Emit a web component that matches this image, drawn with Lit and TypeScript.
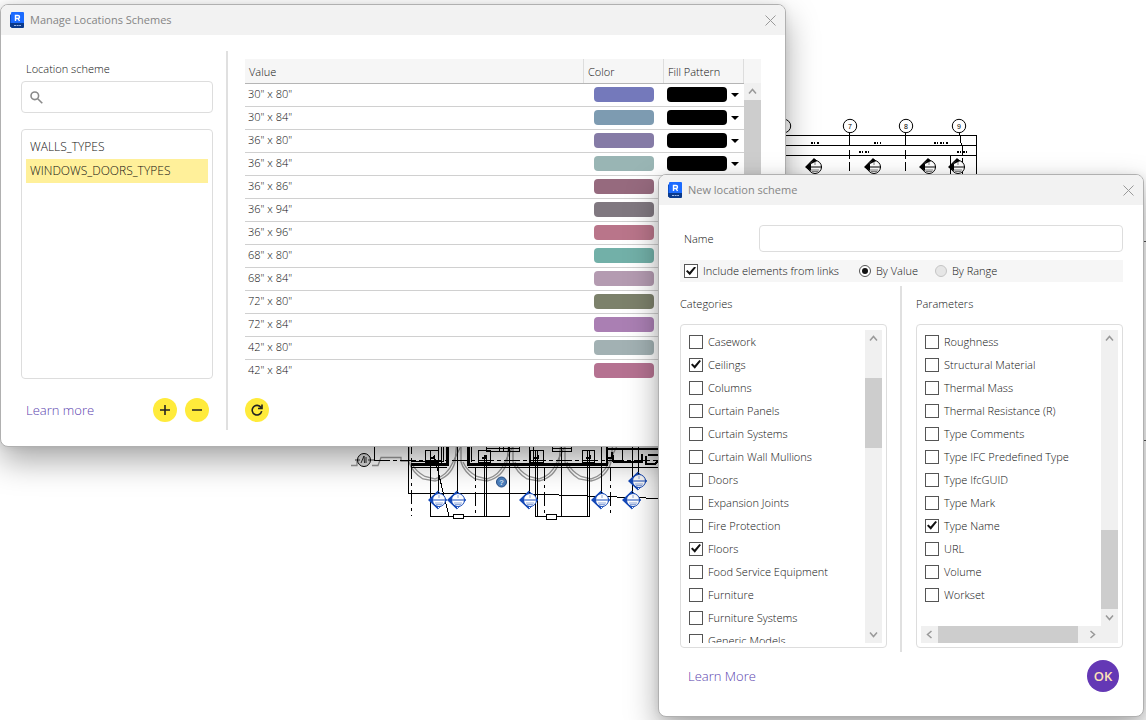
import { LitElement, html, svg, css } from "lit";
import { customElement } from "lit/decorators.js";
import { classMap } from "lit/directives/class-map.js";
import { styleMap } from "lit/directives/style-map.js";

const schemes = ["WALLS_TYPES", "WINDOWS_DOORS_TYPES"];

const values: [string, string][] = [
  ['30" x 80"', "#7479bb"],
  ['30" x 84"', "#7d9bb1"],
  ['36" x 80"', "#857ba6"],
  ['36" x 84"', "#99b5b4"],
  ['36" x 86"', "#966a7e"],
  ['36" x 94"', "#807880"],
  ['36" x 96"', "#b9758a"],
  ['68" x 80"', "#72b0a8"],
  ['68" x 84"', "#b49bb1"],
  ['72" x 80"', "#7c816b"],
  ['72" x 84"', "#aa7fb3"],
  ['42" x 80"', "#a2b1b3"],
  ['42" x 84"', "#b57291"],
];

const categories = [
  "Casework", "Ceilings", "Columns", "Curtain Panels", "Curtain Systems",
  "Curtain Wall Mullions", "Doors", "Expansion Joints", "Fire Protection",
  "Floors", "Food Service Equipment", "Furniture", "Furniture Systems",
  "Generic Models",
];

const parameters = [
  "Roughness", "Structural Material", "Thermal Mass", "Thermal Resistance (R)",
  "Type Comments", "Type IFC Predefined Type", "Type IfcGUID", "Type Mark",
  "Type Name", "URL", "Volume", "Workset",
];

const checked = new Set(["Ceilings", "Floors", "Type Name"]);

const base = css`
  * { box-sizing: border-box; }
  button, input, select { font: inherit; color: inherit; margin: 0; }
  button { border: 0; padding: 0; background: none; }
  .scroll { display: flex; flex-direction: column; background: #f0f0f0; width: 17px; }
  .scroll.flat { flex-direction: row; width: auto; height: 17px; }
  .arrow { flex: none; width: 17px; height: 17px; display: grid; place-items: center; }
  .arrow svg, .close svg { display: block; fill: none; stroke: #999; }
  .arrow svg { stroke-width: 1.5; }
  .thumb { background: #cdcdcd; }
  .link { color: #5b3fae; font-size: 13px; line-height: 20px; text-decoration: none; }
`;

const arrow = (d: string) => html`<span class="arrow"><svg width="9" height="9" viewBox="0 0 9 9"><path d=${d} /></svg></span>`;
const UP = "M1 6.500L4.500 2.500L8 6.500";
const DOWN = "M1 2.500L4.500 6.500L8 2.500";
const LEFT = "M6.500 1L2.500 4.500L6.500 8";
const RIGHT = "M2.500 1L6.500 4.500L2.500 8";

/** Floor plan shown on the drawing canvas behind the dialogs. */
@customElement("floor-plan")
class FloorPlan extends LitElement {
  static styles = css`
    :host { display: block; }
    svg { display: block; }
    text { font-family: "Liberation Sans", sans-serif; text-anchor: middle; }
  `;

  private grid(x: number, label: string) {
    return svg`<circle cx=${x} cy="126" r="6.700" fill="#fff" stroke="#000" />
      <text x=${x} y="128.500" font-size="7" font-weight="400">${label}</text>`;
  }

  private marker(x: number, y: number, color: string, outlined: boolean) {
    return svg`<g transform="translate(${x} ${y})" stroke=${color}>
      <path d=${outlined ? "M-10 0L0 -9.500V-4L-3 0L0 4V9.500Z" : "M-9 0L0 -9L4 -5L-2 -4L-4 0L-2 6Z"} fill=${color} stroke="none" />
      ${outlined ? svg`<path d="M0 -9L9 0L0 9" fill="none" stroke-width=".8" />` : ""}
      <circle cx="1" r="6.500" fill="#fff" />
      ${outlined ? "" : svg`<path d="M-8 0L1 -8L3 -6L-3 -3V4Z" fill=${color} stroke="none" />`}
      ${outlined ? svg`<path d="M-9 0L-1 -8V-6Q-6 -4 -6 0T-1 6V8Z" fill=${color} stroke="none" />` : ""}
      <path d="M-7 0H8" />
      <path d="M1 -5V-2M-3 3H5M-2 4.500H4" stroke-width=".8" opacity=".6" />
    </g>`;
  }

  render() {
    return html`<svg width="1146" height="720" viewBox="0 0 1146 720" aria-hidden="true">
      <g stroke="#000" fill="none" shape-rendering="crispEdges">
        <path d="M700 135.500H976.500V200M700 145.500H976M700 155.500H976M849.500 133V146M905.500 133V146M959.500 133L961.500 146M950.500 155V190" />
        <path d="M849.500 150V190M905.500 150V190M962.500 146V190" stroke-dasharray="9 3" />
        <path d="M811 142.500H819M874 142.500H881M934 142.500H948M859 151.500H870M957 151.500H969" stroke-dasharray="2 1 1 2" stroke-width="2" />
        <path d="M1140 241.500H1146M1140 440.500H1146" stroke="#555" />
      </g>
      ${this.grid(784, "")}${this.grid(850, "7")}${this.grid(906, "8")}${this.grid(959, "9")}
      ${[814, 873, 928, 957].map((x) => this.marker(x, 167, "#000", false))}

      <g fill="none" stroke="#999" stroke-width="1.300">
        <path d="M351 465.500H357V461M372 465.500H378L381 457.500H401V461H408" />
        ${[409, 461, 513, 565].map((x) => svg`
          <path d=${`M${x} 440V462Q${x + 3} 472 ${x + 14} 479L${x + 26} 481Q${x + 42} 477 ${x + 46} 462L${x + 48} 440`} />
          <path d=${`M${x + 2} 462Q${x + 6} 471 ${x + 16} 476.500L${x + 26} 479Q${x + 38} 476 ${x + 44} 462L${x + 52} 446`} />`)}
      </g>
      <g fill="none" stroke="#000" shape-rendering="crispEdges">
        <path d="M374.500 440V460M408.500 440V493.500H515L660 498.500M430.500 450V516.500H509.500V440M457.500 440V493M441.500 440V464M434.500 456V466M438.500 440V494M484.500 455V516M486.500 455V516M529.500 440V495M535.500 450V516.500H589.500V450M537.500 450V516M533.500 440V464M561.500 440V516M587.500 450V516M601.500 440V495M632.500 440V495M638.500 440V476M434 455L449 516" />
        <path d="M425.500 450.500H438.500V462.500H425.500ZM478.500 450.500H490.500V462.500H478.500ZM530.500 450.500H543.500V462.500H530.500ZM582.500 450.500H594.500V462.500H582.500Z" />
        <path d="M486.500 440V451.500H519.500V440M499.500 446V451M503.500 446V451M508.500 446V451M552.500 440V451.500H571.500V440M552.500 448.500H571M487 448.500H519" />
        <path d="M411 464.500H447.500V440M468.500 440V464.500H608" stroke-width="3" />
        <path d="M443.500 440V461H411M471.500 440V462M411 467.500H447M468 467.500H608" />
        <path d="M374 460.500H660" stroke-dasharray="16 3 4 3" />
        <path d="M411.500 440V516M475.500 467V516M544.500 467V516M610.500 467V516" stroke-dasharray="14 4 3 4" />
        <path d="M606 448.500H660M606.500 440V464M613 461.500H642V454M648 454.500H660M613 455V462M646 456V464H655L660 459" stroke-width="2" />
        <path d="M608 467.500H660M622.500 448V460" />
        <path d="M430 458H434V456M482 458H486V455M534 458H538V455M586 458H590V455M607 458H612V452" stroke-width="2" />
        <path d="M453.500 514.500H463.500V518.500H453.500ZM546.500 514.500H556.500V519.500H546.500Z" fill="#fff" />
      </g>
      <circle cx="364" cy="460" r="6.500" fill="#ddd" stroke="#000" />
      <path d="M355 460H360M368 460H374M361 463L364 456L364.500 463M366 457V463" fill="none" stroke="#000" stroke-width=".8" />
      ${[438, 457, 529, 601, 632].map((x) => this.marker(x, 500, "#1549b8", true))}
      ${this.marker(638, 481, "#1549b8", true)}
      <circle cx="501.500" cy="482" r="5" fill="#4d80be" stroke="#274f87" />
      <text x="501.500" y="485" font-size="8" font-weight="700" fill="#d7e5f5">?</text>
    </svg>`;
  }
}

/** Rounded dialog frame with its title bar. */
@customElement("dialog-window")
class DialogWindow extends LitElement {
  static properties = { heading: {} };
  declare heading: string;

  static styles = [base, css`
    :host {
      display: block;
      background: #fff;
      border: 1px solid #b0b0b0;
      border-radius: 8px;
      overflow: hidden;
      box-shadow: 0 14px 32px rgba(0, 0, 0, .34), 0 0 8px rgba(0, 0, 0, .08);
    }
    .title {
      display: flex; align-items: center; gap: 5px;
      height: 30px; padding: 0 7px 0 8px;
      background: #f2f2f2; color: #858585;
    }
    .title h1 { flex: 1; margin: 0; font-size: 11px; font-weight: 400; line-height: 18px; }
    .close { width: 16px; height: 16px; display: grid; place-items: center; }
  `];

  render() {
    return html`
      <header class="title">
        <svg width="16" height="17" viewBox="0 0 16 17" aria-hidden="true">
          <path d="M1 3L3 1V16L1 14Z" fill="#0c4fc4" />
          <rect x="2" y="0" width="13" height="12" rx="1" fill="#1c6bff" />
          <path d="M1 11H15V15Q15 16 14 16H3L1 14.500Z" fill="#0a3a8c" />
          <path d="M6.500 9V3.500H9Q10.500 3.500 10.500 5T9 6.500H7M9 6.500L10.500 9" fill="none" stroke="#fff" stroke-width="1.400" />
          <path d="M5 13.500H12" stroke="#9db9ea" stroke-dasharray="2 .6" />
        </svg>
        <h1>${this.heading}</h1>
        <button class="close" aria-label="Close">
          <svg width="11" height="11" viewBox="0 0 11 11"><path d="M.5 .5L10.500 10.500M10.500 .5L.5 10.500" /></svg>
        </button>
      </header>
      <slot></slot>`;
  }
}

@customElement("manage-schemes")
class ManageSchemes extends LitElement {
  static styles = [base, css`
    :host { display: flex; padding: 16px 24px 16px 20px; }
    .side { flex: none; width: 192px; display: flex; flex-direction: column; }
    .side label { padding: 8px 5px 0; line-height: 20px; }
    .search { display: flex; align-items: center; height: 32px; margin: 2px 0 16px; padding: 0 8px; border: 1px solid #ddd; border-radius: 4px; }
    .search input { flex: 1; min-width: 0; border: 0; outline: 0; background: none; }
    .list { list-style: none; margin: 0; height: 250px; padding: 5px 4px; border: 1px solid #ddd; border-radius: 4px; font-size: 12px; }
    .list button { display: block; width: 100%; height: 24px; padding: 0 4px; text-align: left; }
    .list .selected { background: #fff09a; }
    .foot { display: flex; align-items: center; gap: 8px; margin-top: 19px; padding: 0 4px 8px 5px; }
    .foot .link { flex: 1; }
    .round { width: 24px; height: 24px; border-radius: 50%; background: #ffeb3b; display: grid; place-items: center; }
    .round svg { display: block; fill: none; stroke: #222; stroke-width: 1.6; }
    .rule { flex: none; width: 2px; margin: 0 17px 0 13px; background: #e0e0e0; }
    .main { flex: 1; min-width: 0; padding-top: 8px; display: flex; flex-direction: column; }
    .grid { display: flex; height: 325px; }
    table { flex: 1; border-collapse: collapse; table-layout: fixed; align-self: flex-start; }
    th, td { padding: 0 3px; font-weight: inherit; text-align: left; }
    th { height: 24px; padding: 2px 4px 0; background: #f6f6f6; border-bottom: 1px solid #b5b5b5; border-right: 1px solid #ddd; }
    td { height: 23px; border-bottom: 1px solid #d0d0d0; }
    .size { padding-bottom: 2px; }
    tr:last-child td { border-bottom: 0; }
    .narrow { width: 80px; }
    .swatch { height: 15px; border-radius: 4px; margin: 0 7px; }
    .fill { display: flex; align-items: center; gap: 4px; }
    .fill select { appearance: none; width: 60px; height: 15px; border: 0; border-radius: 4px; background: #000; }
    .cap { height: 24px; background: #f6f6f6; }
    .scroll .fullness { flex: 1; }
    .main .round { margin-top: 14px; }
  `];

  render() {
    return html`
      <div class="side">
        <label for="q">Location scheme</label>
        <div class="search">
          <svg width="13" height="13" viewBox="0 0 13 13" fill="none" stroke="#8a8a8a" stroke-width="1.600"><circle cx="4.800" cy="4.800" r="3.800" /><path d="M7.700 7.700L12.300 12.300" /></svg>
          <input id="q" type="text" />
        </div>
        <ul class="list">
          ${schemes.map((s, i) => html`<li><button class=${classMap({ selected: i === 1 })}>${s}</button></li>`)}
        </ul>
        <div class="foot">
          <a class="link" href="#">Learn more</a>
          <button class="round" aria-label="Add"><svg width="10" height="10" viewBox="0 0 10 10"><path d="M0 5H10M5 0V10" /></svg></button>
          <button class="round" aria-label="Remove"><svg width="10" height="10" viewBox="0 0 10 10"><path d="M0 5H10" /></svg></button>
        </div>
      </div>
      <div class="rule"></div>
      <div class="main">
        <div class="grid">
          <table>
            <thead><tr><th>Value</th><th class="narrow">Color</th><th class="narrow">Fill Pattern</th></tr></thead>
            <tbody>
              ${values.map(([size, color]) => html`<tr>
                <td class="size">${size}</td>
                <td><div class="swatch" style=${styleMap({ background: color })}></div></td>
                <td><div class="fill">
                  <select aria-label="Fill pattern"><option></option></select>
                  <svg width="8" height="4" viewBox="0 0 8 4"><path d="M0 0H8L4 4Z" /></svg>
                </div></td>
              </tr>`)}
            </tbody>
          </table>
          <div class="scroll"><div class="cap"></div>${arrow(UP)}<div class="thumb fullness"></div></div>
        </div>
        <button class="round" aria-label="Refresh">
          <svg width="12" height="12" viewBox="0 0 12 12"><path d="M10 3.500A4.800 4.800 0 1 0 10.700 7.200M11 .5V4.500H7" /></svg>
        </button>
      </div>`;
  }
}

@customElement("new-scheme")
class NewScheme extends LitElement {
  static styles = [base, css`
    :host { display: block; padding: 20px 20px 24px 21px; }
    .name { display: flex; align-items: center; padding-left: 4px; }
    .name label { width: 75px; }
    .name input { flex: 1; min-width: 0; height: 27px; border: 1px solid #ddd; border-radius: 4px; background: #fff; }
    .options { display: flex; align-items: center; height: 22px; margin-top: 8px; padding: 0 4px; background: #f6f6f6; }
    .options label, .item { display: flex; align-items: center; gap: 5px; white-space: nowrap; }
    .options label + label { margin-left: 20px; }
    .options label + label + label { margin-left: 17px; }
    input[type="checkbox"], input[type="radio"] { appearance: none; flex: none; display: grid; place-items: center; width: 14px; height: 14px; border: 1px solid #555; background: #fff; }
    input[type="checkbox"]:checked::before { content: ""; width: 10px; height: 9px; background: #111; clip-path: polygon(0 52%, 14% 38%, 36% 62%, 84% 0, 100% 12%, 38% 98%); }
    input[type="radio"] { width: 12px; height: 12px; border-radius: 50%; }
    input[type="radio"]:checked::before { content: ""; width: 6px; height: 6px; border-radius: 50%; background: #111; }
    input[type="radio"]:disabled { border-color: #c5c5c5; background: #e6e6e6; }
    .columns { display: flex; margin-top: 4px; }
    .column { flex: 1; min-width: 0; }
    h2 { margin: 0; padding: 8px 0 10px; font-size: 11px; font-weight: inherit; line-height: 20px; }
    .rule { flex: none; width: 2px; margin: 0 14px -4px 13px; background: #e0e0e0; }
    .box { height: 324px; padding: 5px 4px 4px; border: 1px solid #ddd; border-radius: 4px; display: grid; grid-template-columns: minmax(0, 1fr) 17px; grid-template-rows: minmax(0, 1fr) auto; }
    .items { overflow: hidden; padding-left: 4px; }
    .item { height: 23px; }
    .gap-top { height: 31px; }
    .short { height: 70px; }
    .low { height: 79px; margin-top: auto; }
    .grow { flex: 1; }
    .wide { flex: 1; margin-right: 6px; }
    .corner { background: #f0f0f0; }
    .foot { display: flex; align-items: center; justify-content: space-between; margin-top: 12px; padding: 0 4px 0 8px; }
    .ok { width: 32px; height: 32px; border-radius: 50%; background: #6438b5; color: #ffe3b8; font-size: 13px; font-weight: 600; }
  `];

  private items(names: string[]) {
    return html`<div class="items">${names.map((n) => html`<label class="item"><input type="checkbox" .checked=${checked.has(n)} />${n}</label>`)}</div>`;
  }

  render() {
    return html`
      <div class="name"><label for="name">Name</label><input id="name" type="text" /></div>
      <div class="options">
        <label><input type="checkbox" checked />Include elements from links</label>
        <label><input type="radio" name="mode" checked />By Value</label>
        <label><input type="radio" name="mode" disabled />By Range</label>
      </div>
      <div class="columns">
        <section class="column">
          <h2>Categories</h2>
          <div class="box">
            ${this.items(categories)}
            <div class="scroll">${arrow(UP)}<div class="gap-top"></div><div class="thumb short"></div><div class="grow"></div>${arrow(DOWN)}</div>
          </div>
        </section>
        <div class="rule"></div>
        <section class="column">
          <h2>Parameters</h2>
          <div class="box">
            ${this.items(parameters)}
            <div class="scroll">${arrow(UP)}<div class="thumb low"></div>${arrow(DOWN)}</div>
            <div class="scroll flat">${arrow(LEFT)}<div class="thumb wide"></div>${arrow(RIGHT)}</div>
            <div class="corner"></div>
          </div>
        </section>
      </div>
      <div class="foot"><a class="link" href="#">Learn More</a><button class="ok">OK</button></div>`;
  }
}

@customElement("app-root")
class AppRoot extends LitElement {
  static styles = css`
    :host {
      display: block; position: relative; height: 100vh; overflow: hidden;
      background: #fff; color: #111;
      font: 300 11px/18px "Open Sans", "Noto Sans", sans-serif;
    }
    floor-plan { position: absolute; top: 0; left: 0; }
    dialog-window { position: absolute; }
    .manage { top: 4px; left: 0; right: 360px; }
    .create { top: 174px; left: 658px; right: 2px; }
  `;

  render() {
    return html`
      <floor-plan></floor-plan>
      <dialog-window class="manage" heading="Manage Locations Schemes"><manage-schemes></manage-schemes></dialog-window>
      <dialog-window class="create" heading="New location scheme"><new-scheme></new-scheme></dialog-window>`;
  }
}
